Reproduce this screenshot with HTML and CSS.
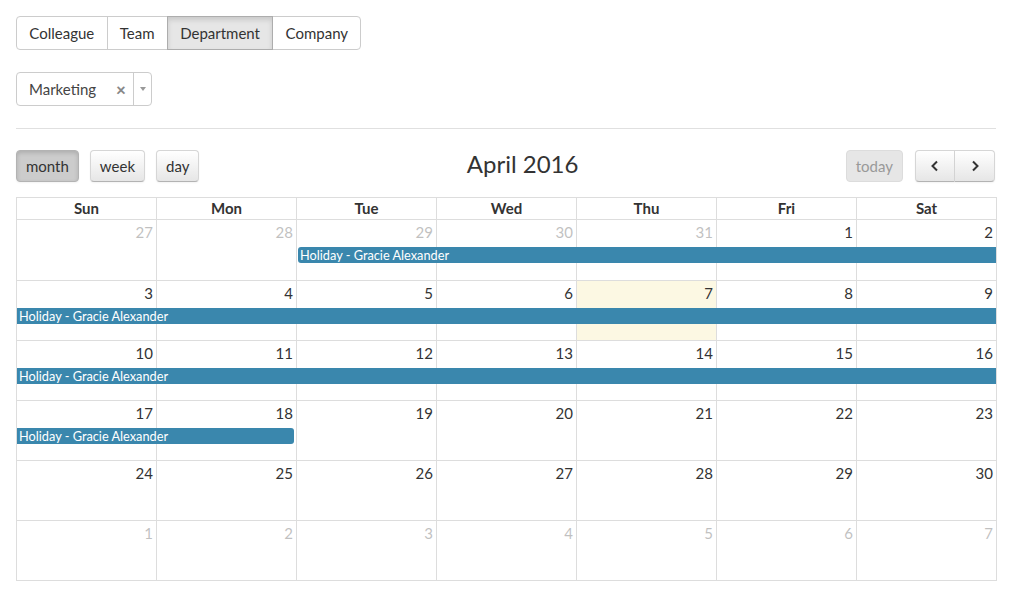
FILE: index.html
```html
<!DOCTYPE html>
<html lang="en">
  <head>
    <meta charset="UTF-8" />
    <title>Department calendar</title>
    <link rel="stylesheet" href="styles.css">
  </head>
  <body>
    <div class="page">
      <div class="scope-group">
        <button class="btn">Colleague</button>
        <button class="btn">Team</button>
        <button class="btn active">Department</button>
        <button class="btn">Company</button>
      </div>

      <div class="picker">
        <span class="picker-value">Marketing</span>
        <span class="picker-clear">&times;</span>
        <span class="picker-arrow"></span>
      </div>

      <hr class="rule" />

      <div class="calendar">
        <div class="toolbar">
          <div class="toolbar-left">
            <button class="fc-btn active">month</button>
            <button class="fc-btn">week</button>
            <button class="fc-btn">day</button>
          </div>
          <h2 class="title">April 2016</h2>
          <div class="toolbar-right">
            <button class="fc-btn disabled">today</button>
            <div class="nav-group">
              <button class="fc-btn nav-left">
                <svg width="12" height="12" viewBox="0 0 12 12"><path d="M8 1.5 L3.5 6 L8 10.5" fill="none" stroke="#333" stroke-width="2"/></svg>
              </button>
              <button class="fc-btn nav-right">
                <svg width="12" height="12" viewBox="0 0 12 12"><path d="M4 1.5 L8.5 6 L4 10.5" fill="none" stroke="#333" stroke-width="2"/></svg>
              </button>
            </div>
          </div>
        </div>

        <div class="grid">
          <div class="weekdays">
            <div>Sun</div><div>Mon</div><div>Tue</div><div>Wed</div><div>Thu</div><div>Fri</div><div>Sat</div>
          </div>

          <div class="week">
            <div class="cell c1"></div><div class="cell c2"></div><div class="cell c3"></div><div class="cell c4"></div><div class="cell c5"></div><div class="cell c6"></div><div class="cell c7"></div>
            <span class="num c1 other">27</span><span class="num c2 other">28</span><span class="num c3 other">29</span><span class="num c4 other">30</span><span class="num c5 other">31</span><span class="num c6">1</span><span class="num c7">2</span>
            <div class="event start" style="grid-column: 3 / 8;">Holiday - Gracie Alexander</div>
          </div>

          <div class="week">
            <div class="cell c1"></div><div class="cell c2"></div><div class="cell c3"></div><div class="cell c4"></div><div class="cell c5 today"></div><div class="cell c6"></div><div class="cell c7"></div>
            <span class="num c1">3</span><span class="num c2">4</span><span class="num c3">5</span><span class="num c4">6</span><span class="num c5">7</span><span class="num c6">8</span><span class="num c7">9</span>
            <div class="event" style="grid-column: 1 / 8;">Holiday - Gracie Alexander</div>
          </div>

          <div class="week">
            <div class="cell c1"></div><div class="cell c2"></div><div class="cell c3"></div><div class="cell c4"></div><div class="cell c5"></div><div class="cell c6"></div><div class="cell c7"></div>
            <span class="num c1">10</span><span class="num c2">11</span><span class="num c3">12</span><span class="num c4">13</span><span class="num c5">14</span><span class="num c6">15</span><span class="num c7">16</span>
            <div class="event" style="grid-column: 1 / 8;">Holiday - Gracie Alexander</div>
          </div>

          <div class="week">
            <div class="cell c1"></div><div class="cell c2"></div><div class="cell c3"></div><div class="cell c4"></div><div class="cell c5"></div><div class="cell c6"></div><div class="cell c7"></div>
            <span class="num c1">17</span><span class="num c2">18</span><span class="num c3">19</span><span class="num c4">20</span><span class="num c5">21</span><span class="num c6">22</span><span class="num c7">23</span>
            <div class="event end" style="grid-column: 1 / 3;">Holiday - Gracie Alexander</div>
          </div>

          <div class="week">
            <div class="cell c1"></div><div class="cell c2"></div><div class="cell c3"></div><div class="cell c4"></div><div class="cell c5"></div><div class="cell c6"></div><div class="cell c7"></div>
            <span class="num c1">24</span><span class="num c2">25</span><span class="num c3">26</span><span class="num c4">27</span><span class="num c5">28</span><span class="num c6">29</span><span class="num c7">30</span>
          </div>

          <div class="week">
            <div class="cell c1"></div><div class="cell c2"></div><div class="cell c3"></div><div class="cell c4"></div><div class="cell c5"></div><div class="cell c6"></div><div class="cell c7"></div>
            <span class="num c1 other">1</span><span class="num c2 other">2</span><span class="num c3 other">3</span><span class="num c4 other">4</span><span class="num c5 other">5</span><span class="num c6 other">6</span><span class="num c7 other">7</span>
          </div>
        </div>
      </div>
    </div>
  </body>
</html>
```

FILE: styles.css
```css
body {
  margin: 0;
  background: #fff;
  color: #333;
  font-family: Lato, "Liberation Sans", sans-serif;
  font-size: 15px;
}
.page {
  width: 981px;
  padding: 16px 0 0 16px;
}
button {
  font-family: inherit;
}

/* scope switch */
.scope-group {
  display: flex;
}
.btn {
  height: 34px;
  padding: 0 12.3px;
  font-size: 15px;
  color: #333;
  background: #fff;
  border: 1px solid #ccc;
  margin-left: -1px;
}
.btn:first-child {
  margin-left: 0;
  border-radius: 4px 0 0 4px;
}
.btn:last-child {
  border-radius: 0 4px 4px 0;
}
.btn.active {
  background: #e6e6e6;
  border-color: #adadad;
  box-shadow: inset 0 3px 5px rgba(0, 0, 0, 0.125);
  position: relative;
}

/* department picker */
.picker {
  margin-top: 22px;
  width: 134px;
  height: 32px;
  border: 1px solid #ccc;
  border-radius: 4px;
  display: flex;
  align-items: center;
}
.picker-value {
  padding-left: 12px;
  color: #444;
  flex: 1;
}
.picker-clear {
  color: #888;
  font-weight: 900;
  font-size: 17px;
  width: 16px;
  margin-right: 1px;
}
.picker-arrow {
  height: 32px;
  width: 17px;
  border-left: 1px solid #ccc;
  position: relative;
}
.picker-arrow::after {
  content: "";
  position: absolute;
  left: 6px;
  top: 14px;
  border-left: 3px solid transparent;
  border-right: 3px solid transparent;
  border-top: 4px solid #999;
}

.rule {
  margin: 22px 0 0;
  border: 0;
  border-top: 1px solid #e0e0e0;
  width: 980px;
}

/* calendar toolbar */
.toolbar {
  margin-top: 21px;
  display: flex;
  align-items: center;
  height: 32px;
  width: 979px;
}
.toolbar-left,
.toolbar-right {
  display: flex;
  gap: 11px;
}
.toolbar-right {
  gap: 12px;
}
.title {
  flex: 1;
  margin: 0 0 6px;
  text-align: center;
  font-size: 24px;
  font-weight: normal;
  color: #333;
}
.fc-btn {
  height: 32px;
  padding: 0 9px;
  font-size: 15px;
  color: #333;
  background-color: #f5f5f5;
  background-image: linear-gradient(to bottom, #fff, #e6e6e6);
  border: 1px solid #d6d6d6;
  border-bottom-color: #b3b3b3;
  border-radius: 4px;
  box-shadow: inset 0 1px 0 rgba(255, 255, 255, 0.2), 0 1px 2px rgba(0, 0, 0, 0.05);
}
.fc-btn.active {
  background: #ccc;
  border-color: #b3b3b3;
  box-shadow: inset 0 2px 4px rgba(0, 0, 0, 0.15), 0 1px 2px rgba(0, 0, 0, 0.05);
}
.fc-btn.disabled {
  background: #e6e6e6;
  color: #999;
  box-shadow: none;
  border-color: #dcdcdc;
}
.nav-group {
  display: flex;
}
.nav-left,
.nav-right {
  width: 40px;
  padding: 0;
  display: flex;
  align-items: center;
  justify-content: center;
}
.nav-left {
  border-radius: 4px 0 0 4px;
}
.nav-right {
  border-radius: 0 4px 4px 0;
  border-left: 0;
}

/* month grid */
.grid {
  margin-top: 15px;
  border-left: 1px solid #ddd;
  border-top: 1px solid #ddd;
}
.weekdays {
  display: grid;
  grid-template-columns: repeat(7, 140px);
  border-bottom: 1px solid #ddd;
}
.weekdays div {
  height: 21px;
  line-height: 21px;
  text-align: center;
  font-weight: bold;
  border-right: 1px solid #ddd;
}
.week {
  display: grid;
  grid-template-columns: repeat(7, 140px);
  grid-template-rows: 26px auto 1fr;
  height: 59px;
  border-bottom: 1px solid #ddd;
}
.week:nth-child(2) {
  height: 60px;
}
.cell {
  grid-row: 1 / 4;
  border-right: 1px solid #ddd;
}
.cell.today {
  background: #fcf8e3;
}
.c1 { grid-column: 1; }
.c2 { grid-column: 2; }
.c3 { grid-column: 3; }
.c4 { grid-column: 4; }
.c5 { grid-column: 5; }
.c6 { grid-column: 6; }
.c7 { grid-column: 7; }
.num {
  grid-row: 1;
  text-align: right;
  padding: 2px 4px 0 0;
  line-height: 20px;
  font-size: 15px;
}
.num.other {
  opacity: 0.3;
}
.event {
  grid-row: 2;
  margin: 1px 1px 0 0;
  height: 15px;
  line-height: 15px;
  padding: 1px 0 0 2px;
  background: #3a87ad;
  color: #fff;
  font-size: 12.75px;
  white-space: nowrap;
  overflow: hidden;
}
.event.start {
  margin-left: 1px;
  border-radius: 3px 0 0 3px;
}
.event.end {
  margin-right: 3px;
  border-radius: 0 3px 3px 0;
}
```
